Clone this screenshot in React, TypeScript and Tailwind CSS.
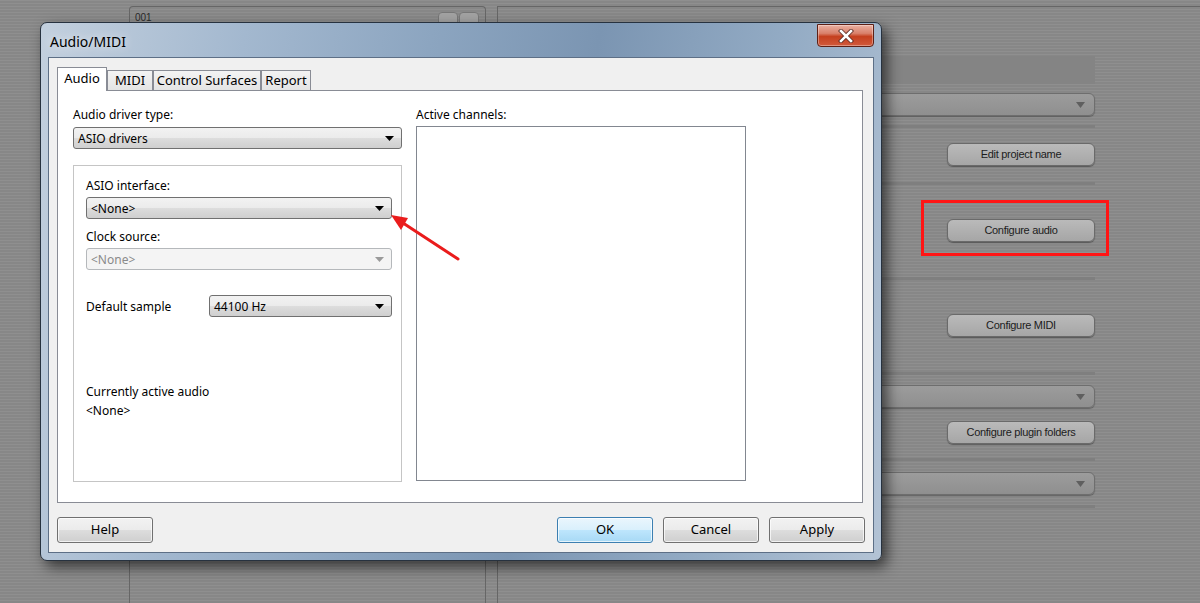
import React from "react";

const brushed =
  "bg-[repeating-linear-gradient(180deg,rgba(255,255,255,0.035)_0px,rgba(255,255,255,0.035)_1px,rgba(0,0,0,0.03)_1px,rgba(0,0,0,0.03)_3px)]";

function AppButton({ label }: { label: string }) {
  return (
    <div className="flex h-[23px] w-[148px] items-center justify-center self-end rounded-[6px] border border-[#6a6a6a] bg-[linear-gradient(180deg,#bababa_0%,#a6a6a6_100%)] font-['Liberation_Sans',Arial,sans-serif] text-[11px] tracking-[-0.3px] text-[#1c1c1c] shadow-[0_1px_1px_rgba(0,0,0,0.35)]">
      {label}
    </div>
  );
}

function AppDropdown() {
  return (
    <div className="flex h-[23px] items-center justify-end rounded-[6px] border border-[#6e6e6e] bg-[linear-gradient(180deg,#9c9c9c_0%,#8f8f8f_100%)] pr-[9px] shadow-[0_1px_1px_rgba(0,0,0,0.3)]">
      <svg width="9" height="6" viewBox="0 0 9 6">
        <path d="M0 0h9L4.5 6z" fill="#5f5f5f" />
      </svg>
    </div>
  );
}

function Separator({ mt }: { mt: string }) {
  return <div className={`h-[3px] bg-[#7f7f7f] ${mt}`} />;
}

function Combo({
  text,
  disabled,
  className = "",
}: {
  text: string;
  disabled?: boolean;
  className?: string;
}) {
  return (
    <div
      className={`flex h-[22px] items-center justify-between rounded-[3px] border pl-[4px] pr-[7px] text-[12px] ${
        disabled
          ? "border-[#b5b8bb] bg-[#f4f4f4] text-[#8a8a8a]"
          : "border-[#707070] bg-[linear-gradient(180deg,#f2f2f2_0%,#ebebeb_50%,#dddddd_50%,#cfcfcf_100%)] text-black"
      } ${className}`}
    >
      <span className="pt-[2px]">{text}</span>
      <svg width="9" height="5" viewBox="0 0 9 5">
        <path d="M0 0h9L4.5 5z" fill={disabled ? "#9a9a9a" : "#000"} />
      </svg>
    </div>
  );
}

function WinButton({ label, primary }: { label: string; primary?: boolean }) {
  return (
    <div
      className={`flex h-[26px] w-[96px] items-center justify-center rounded-[3px] border text-[13px] text-black shadow-[inset_0_0_0_1px_rgba(255,255,255,0.7)] ${
        primary
          ? "border-[#3c7fb1] bg-[linear-gradient(180deg,#eaf6fd_0%,#d9f0fc_50%,#bee6fd_50%,#a7d9f5_100%)]"
          : "border-[#707070] bg-[linear-gradient(180deg,#f2f2f2_0%,#ebebeb_50%,#dddddd_50%,#cfcfcf_100%)]"
      }`}
    >
      {label}
    </div>
  );
}

function Tab({
  label,
  width,
  active,
}: {
  label: string;
  width: string;
  active?: boolean;
}) {
  return (
    <div
      className={`flex items-center justify-center border border-b-0 border-[#898c95] text-[13px] text-black ${width} ${
        active
          ? "relative z-10 mb-[-1px] h-[24px] bg-white pb-[2px]"
          : "h-[20px] bg-[linear-gradient(180deg,#f3f3f3_0%,#e4e4e4_100%)]"
      }`}
    >
      {label}
    </div>
  );
}

function Dialog() {
  return (
    <div className="absolute left-[40px] top-[22px] flex h-[539px] w-[842px] flex-col rounded-[7px] border border-[#27323f] bg-[linear-gradient(100deg,#c3d0de_0%,#a3b8cf_22%,#8ca5c0_42%,#7b95b2_60%,#93abc4_80%,#b3c3d5_100%)] px-[7px] pb-[7px] font-['Noto_Sans',sans-serif] shadow-[5px_6px_14px_rgba(0,0,0,0.6)]">
      <div className="relative flex h-[34px] shrink-0 items-center pl-[2px] pt-[2px]">
        <span className="text-[14px] text-black [text-shadow:0_0_10px_rgba(255,255,255,0.9)]">
          Audio/MIDI
        </span>
        <div className="absolute right-0 top-[1px] flex h-[23px] w-[57px] items-center justify-center rounded-b-[4px] border border-[#5e2015] bg-[linear-gradient(180deg,#eab0a2_0%,#d9806a_40%,#c5401f_55%,#d15a3c_100%)] shadow-[inset_0_0_0_1px_rgba(255,255,255,0.35)]">
          <svg width="16" height="14" viewBox="0 0 16 14">
            <path
              d="M3 2l10 10M13 2L3 12"
              stroke="#5a2a22"
              strokeWidth="4.2"
              strokeLinecap="square"
            />
            <path
              d="M3 2l10 10M13 2L3 12"
              stroke="#ffffff"
              strokeWidth="2.6"
              strokeLinecap="square"
            />
          </svg>
        </div>
      </div>

      <div className="flex flex-1 flex-col border border-[#5d6f86] bg-[#f0f0f0] pt-[10px]">
        <div className="ml-[8px] flex h-[22px] items-end">
          <Tab label="Audio" width="w-[50px]" active />
          <Tab label="MIDI" width="w-[46px]" />
          <Tab label="Control Surfaces" width="w-[108px]" />
          <Tab label="Report" width="w-[50px]" />
        </div>

        <div className="ml-[8px] flex h-[413px] w-[806px] border border-[#898c95] bg-white pl-[15px] pt-[15px] text-[12px] text-black">
          <div className="flex w-[329px] flex-col">
            <div className="h-[16px] leading-[18px]">Audio driver type:</div>
            <Combo text="ASIO drivers" className="mt-[5px]" />

            <div className="mt-[16px] flex h-[317px] flex-col border border-[#c5c5c5] pl-[12px] pr-[9px] pt-[11px]">
              <div className="h-[16px] leading-[18px]">ASIO interface:</div>
              <Combo text="<None>" className="mt-[4px]" />
              <div className="mt-[9px] h-[16px] leading-[18px]">Clock source:</div>
              <Combo text="<None>" disabled className="mt-[4px]" />
              <div className="mt-[25px] flex items-center">
                <span className="w-[123px] pt-[2px]">Default sample</span>
                <Combo text="44100 Hz" className="flex-1" />
              </div>
              <div className="mt-[66px] h-[16px] leading-[18px]">
                Currently active audio
              </div>
              <div className="mt-[3px] h-[16px] leading-[18px]">&lt;None&gt;</div>
            </div>
          </div>

          <div className="ml-[14px] flex w-[330px] flex-col">
            <div className="h-[16px] leading-[18px]">Active channels:</div>
            <div className="mt-[4px] h-[355px] border border-[#828790] bg-white" />
          </div>
        </div>

        <div className="mt-[14px] flex pl-[8px] pr-[8px]">
          <WinButton label="Help" />
          <div className="ml-auto flex gap-[10px]">
            <WinButton label="OK" primary />
            <WinButton label="Cancel" />
            <WinButton label="Apply" />
          </div>
        </div>
      </div>
    </div>
  );
}

export default function App() {
  return (
    <div
      className={`relative h-[603px] w-[1200px] overflow-hidden bg-[#8b8b8b] ${brushed}`}
    >
      <div className="flex h-full">
        <div className="w-[129px] shrink-0" />

        <div className="mt-[6px] flex w-[357px] shrink-0 flex-col rounded-t-[4px] border-x border-t border-[#666]">
          <div className="flex h-[24px] items-start justify-between pl-[5px] pr-[6px] pt-[5px]">
            <span className="font-['Liberation_Sans',Arial,sans-serif] text-[10px] leading-[12px] text-[#2a2a2a]">
              001
            </span>
            <div className="flex gap-[1px]">
              <div className="h-[20px] w-[20px] rounded-[4px] border border-[#777] bg-[#a2a2a2]" />
              <div className="h-[20px] w-[20px] rounded-[4px] border border-[#777] bg-[#a2a2a2]" />
            </div>
          </div>
        </div>

        <div className="w-[11px] shrink-0" />

        <div className="mt-[6px] flex flex-1 flex-col border-l border-t border-[#666] pl-[12px] pr-[105px]">
          <div className="mt-[49px] h-[28px] bg-[#848484]" />
          <div className="mt-[9px]">
            <AppDropdown />
          </div>
          <Separator mt="mt-[9px]" />
          <div className="mt-[15px] flex flex-col">
            <AppButton label="Edit project name" />
          </div>
          <Separator mt="mt-[16px]" />
          <div className="mt-[34px] flex flex-col">
            <AppButton label="Configure audio" />
          </div>
          <Separator mt="mt-[35px]" />
          <div className="mt-[34px] flex flex-col">
            <AppButton label="Configure MIDI" />
          </div>
          <Separator mt="mt-[35px]" />
          <div className="mt-[10px]">
            <AppDropdown />
          </div>
          <div className="mt-[13px] flex flex-col">
            <AppButton label="Configure plugin folders" />
          </div>
          <Separator mt="mt-[14px]" />
          <div className="mt-[11px]">
            <AppDropdown />
          </div>
          <Separator mt="mt-[10px]" />
        </div>
      </div>

      <Dialog />

      {/* annotation: red highlight box */}
      <div className="absolute left-[921px] top-[200px] h-[56px] w-[188px] border-[3px] border-[#ff1414]" />

      {/* annotation: red arrow */}
      <svg
        className="pointer-events-none absolute left-0 top-0"
        width="1200"
        height="603"
        viewBox="0 0 1200 603"
      >
        <line
          x1="458"
          y1="259"
          x2="403"
          y2="223"
          stroke="#ea1c1c"
          strokeWidth="3"
          strokeLinecap="round"
        />
        <polygon points="391,215 408,218 401,230" fill="#ea1c1c" />
      </svg>
    </div>
  );
}
